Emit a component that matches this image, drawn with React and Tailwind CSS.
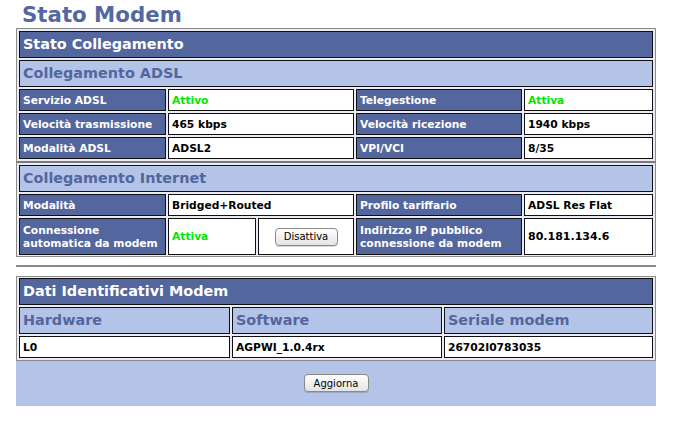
import React from "react";

function Label({ children, className = "" }) {
  return (
    <div className={`bg-[#53669d] border border-[#111] text-white font-bold text-[10.7px] leading-[13px] pl-[3px] flex items-center ${className}`}>
      {children}
    </div>
  );
}

function Value({ children, className = "" }) {
  return (
    <div className={`bg-white border border-[#111] text-black font-bold text-[10.7px] leading-[13px] pl-[3px] flex items-center ${className}`}>
      {children}
    </div>
  );
}

function Header({ children }) {
  return (
    <div className="h-[27px] bg-[#53669d] border border-[#111] text-white font-bold text-[14.4px] pl-[3px] flex items-center">
      {children}
    </div>
  );
}

function SubHeader({ children, className = "" }) {
  return (
    <div className={`h-[27px] bg-[#b4c4e8] border border-[#111] text-[#53669d] font-bold text-[14.4px] pl-[3px] flex items-center ${className}`}>
      {children}
    </div>
  );
}

function Button({ children, className = "" }) {
  return (
    <div className={`h-[18px] flex items-center justify-center rounded-[4px] border border-[#8a8a8a] bg-gradient-to-b from-white to-[#e4e4e4] text-black text-[10px] font-normal shadow-[0_1px_0_rgba(0,0,0,0.15)] ${className}`}>
      {children}
    </div>
  );
}

export default function App() {
  const row = "grid grid-cols-[147px_186px_166px_129px] gap-[2px] h-[22px]";
  return (
    <div className="w-[678px] h-[438px] bg-white font-['DejaVu_Sans',Verdana,sans-serif] pl-4">
      <div className="h-[28px] pl-[6px] text-[21.3px] font-bold text-[#5468a0] leading-[28px] pt-[1px]">
        Stato Modem
      </div>

      <div className="w-[640px] border border-[#8c8c8c] bg-[#ebebf6]">
        <div className="px-[2px] pt-[2px] pb-[2px] flex flex-col gap-[2px]">
          <Header>Stato Collegamento</Header>
          <SubHeader>Collegamento ADSL</SubHeader>
          <div className={row}>
            <Label>Servizio ADSL</Label>
            <Value><span className="text-[#00e600]">Attivo</span></Value>
            <Label>Telegestione</Label>
            <Value><span className="text-[#00e600]">Attiva</span></Value>
          </div>
          <div className={row}>
            <Label>Velocità trasmissione</Label>
            <Value>465 kbps</Value>
            <Label>Velocità ricezione</Label>
            <Value>1940 kbps</Value>
          </div>
          <div className={row}>
            <Label>Modalità ADSL</Label>
            <Value>ADSL2</Value>
            <Label>VPI/VCI</Label>
            <Value>8/35</Value>
          </div>
        </div>
        <div className="h-[2px] bg-[#7a7a7a]" />
        <div className="px-[2px] pt-[2px] pb-[1px] flex flex-col gap-[2px]">
          <SubHeader>Collegamento Internet</SubHeader>
          <div className={row}>
            <Label>Modalità</Label>
            <Value>Bridged+Routed</Value>
            <Label>Profilo tariffario</Label>
            <Value>ADSL Res Flat</Value>
          </div>
          <div className="grid grid-cols-[147px_186px_166px_129px] gap-[2px] h-[37px]">
            <Label>
              <span>
                Connessione
                <br />
                automatica da modem
              </span>
            </Label>
            <div className="grid grid-cols-[88px_96px] gap-[2px]">
              <Value>
                <span className="text-[#00e600]">Attiva</span>
              </Value>
              <div className="bg-white border border-[#111] flex items-center justify-center">
                <Button className="w-[63px]">Disattiva</Button>
              </div>
            </div>
            <Label>
              <span>
                Indirizzo IP pubblico
                <br />
                connessione da modem
              </span>
            </Label>
            <Value className="text-[11px]">80.181.134.6</Value>
          </div>
        </div>
      </div>

      <div className="w-[640px] h-[2px] bg-[#888] mt-[8px] mb-[9px]" />

      <div className="w-[640px] border border-[#8c8c8c] bg-[#ebebf6]">
        <div className="px-[2px] pt-[1px] pb-[2px] flex flex-col gap-[2px]">
          <Header>Dati Identificativi Modem</Header>
          <div className="grid grid-cols-[211px_210px_209px] gap-[2px]">
            <SubHeader>Hardware</SubHeader>
            <SubHeader>Software</SubHeader>
            <SubHeader>Seriale modem</SubHeader>
          </div>
          <div className="grid grid-cols-[211px_210px_209px] gap-[2px] h-[22px]">
            <Value>L0</Value>
            <Value>AGPWI_1.0.4rx</Value>
            <Value>26702I0783035</Value>
          </div>
        </div>
      </div>
      <div className="w-[640px] h-[45px] bg-[#b4c4e8] flex items-center justify-center pb-[1px]">
        <Button className="w-[65px]">Aggiorna</Button>
      </div>
    </div>
  );
}
